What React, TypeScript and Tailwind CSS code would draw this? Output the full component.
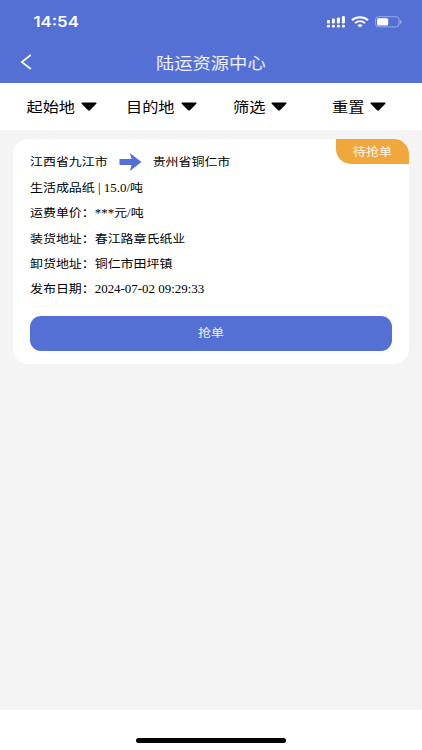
import React from "react";

const filters = [
  { label: "起始地", left: "ml-[26.5px] w-[99.5px]" },
  { label: "目的地", left: "w-[107px]" },
  { label: "筛选", left: "w-[99px]" },
  { label: "重置", left: "w-[60px]" },
];

const details = [
  "生活成品纸 | 15.0/吨",
  "运费单价：***元/吨",
  "装货地址：春江路章氏纸业",
  "卸货地址：铜仁市田坪镇",
  "发布日期：2024-07-02 09:29:33",
];

const bars = [3.6, 5, 6.2, 7.6];

const StatusIcons = () => (
  <div className="flex items-center pb-px">
    <svg width="20" height="12" viewBox="0 0 20 12" fill="#fff">
      {bars.map((h, i) => (
        <g key={i}>
          <rect x={0.9 + i * 5} y={7.6 - h} width="3" height={h} rx="1.1" />
          <rect x={0.9 + i * 5} y="8.8" width="3" height="2.6" rx="1.2" />
        </g>
      ))}
    </svg>
    <svg
      className="ml-[5px]"
      width="18"
      height="12"
      viewBox="0 0 18 12"
      fill="none"
      stroke="#fff"
      strokeWidth="1.9"
    >
      <path d="M0.9 4.3C5.5 0.2 12.5 0.2 17.1 4.3" />
      <path d="M4 7.1C6.9 4.6 11.1 4.6 14 7.1" />
      <path d="M6.4 9.2C7.9 7.9 10.1 7.9 11.6 9.2L9 11.4Z" fill="#fff" stroke="none" />
    </svg>
    <svg className="ml-[6px]" width="27" height="12" viewBox="0 0 27 12">
      <rect x="0.5" y="0.7" width="23.6" height="10.2" rx="3" fill="none" stroke="#fff" strokeOpacity="0.4" />
      <rect x="2" y="2.2" width="11.2" height="7.2" rx="1.5" fill="#fff" />
      <path d="M25.2 4V8C27 7.3 27 4.7 25.2 4Z" fill="#fff" fillOpacity="0.5" />
    </svg>
  </div>
);

const App = () => {
  return (
    <div className="flex h-[750px] w-[422px] flex-col overflow-hidden bg-white text-black font-['Liberation_Serif','Noto_Sans_CJK_SC',serif]">
      <header className="h-[83px] shrink-0 bg-[#5570d5] text-white">
        <div className="flex h-[45px] items-center justify-between pl-[33.5px] pr-[20px]">
          <span className="scale-y-[.87] text-[16.8px] font-semibold font-['Inter',sans-serif]">
            14:54
          </span>
          <StatusIcons />
        </div>
        <div className="flex h-[34px] items-center">
          <svg
            className="ml-[20px]"
            width="12"
            height="16"
            viewBox="0 0 12 16"
            fill="none"
            stroke="#fff"
            strokeWidth="1.6"
          >
            <path d="M10.8 1L1.8 8L10.8 15" />
          </svg>
          <h1 className="ml-[124px] scale-y-[.87] pt-[5px] text-[18.3px] leading-none text-white/90">
            陆运资源中心
          </h1>
        </div>
      </header>

      <nav className="flex h-[47px] shrink-0 items-center">
        {filters.map((f) => (
          <button key={f.label} className={`flex shrink-0 items-center ${f.left}`}>
            <span className="scale-y-[.87] pt-[3px] text-[16.2px] leading-none">{f.label}</span>
            <svg className="ml-[6px] mt-px" width="16" height="9" viewBox="0 0 16 9">
              <path d="M1 0.5H15Q16 1 15.3 1.8L9.2 8Q8 9 6.8 8L0.7 1.8Q0 1 1 0.5Z" />
            </svg>
          </button>
        ))}
      </nav>

      <main className="h-[580px] shrink-0 bg-[#f4f4f4] px-[13px] pt-[9px]">
        <section className="relative h-[225px] rounded-[15px] bg-white px-[17px] pt-[10px] text-[12.95px]">
          <div className="absolute right-0 top-0 flex h-[25px] w-[73px] items-center justify-center rounded-bl-[15px] rounded-tr-[15px] bg-[#f0a73c] text-white/90">
            <span className="scale-y-[.87] pt-[2px]">待抢单</span>
          </div>
          <div className="flex h-[26px] items-center">
            <span className="scale-y-[.87] pt-[2px]">江西省九江市</span>
            <svg className="mx-[11px]" width="23" height="20" viewBox="0 0 23 20" fill="#5570d5">
              <path d="M0.5 7H12.6L10.8 1L22.5 10L10.8 19L12.6 13H0.5Z" />
            </svg>
            <span className="scale-y-[.87] pt-[2px]">贵州省铜仁市</span>
          </div>
          {details.map((d) => (
            <p key={d} className="h-[25.3px] scale-y-[.91] whitespace-nowrap leading-[25.3px]">
              {d}
            </p>
          ))}
          <hr className="mt-[5px] border-[#f8f8f6]" />
          <button className="mt-[9px] flex h-[34.5px] w-[362px] items-center justify-center rounded-[11px] bg-[#5570d5] text-white/90">
            <span className="scale-y-[.87]">抢单</span>
          </button>
        </section>
      </main>

      <footer className="flex flex-1 justify-center pt-[28px]">
        <div className="h-[5px] w-[150px] rounded-full bg-black" />
      </footer>
    </div>
  );
};

export default App;
